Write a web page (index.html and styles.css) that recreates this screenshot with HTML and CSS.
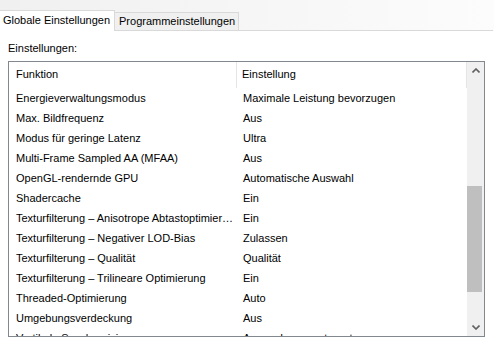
FILE: index.html
```html
<!DOCTYPE html>
<html lang="de">
<head>
    <meta charset="UTF-8">
    <title>Globale Einstellungen</title>
    <link rel="stylesheet" href="styles.css">
</head>
<body>
    <div class="tabs">
        <div class="tab active">Globale Einstellungen</div>
        <div class="tab">Programmeinstellungen</div>
        <div class="tab-rest"></div>
    </div>
    <div class="panel">
        <div class="label">Einstellungen:</div>
        <div class="listbox">
            <div class="list">
                <div class="row head">
                    <div class="col-a">Funktion</div>
                    <div class="col-b">Einstellung</div>
                </div>
                <div class="row"><div class="col-a">Energieverwaltungsmodus</div><div class="col-b">Maximale Leistung bevorzugen</div></div>
                <div class="row"><div class="col-a">Max. Bildfrequenz</div><div class="col-b">Aus</div></div>
                <div class="row"><div class="col-a">Modus für geringe Latenz</div><div class="col-b">Ultra</div></div>
                <div class="row"><div class="col-a">Multi-Frame Sampled AA (MFAA)</div><div class="col-b">Aus</div></div>
                <div class="row"><div class="col-a">OpenGL-rendernde GPU</div><div class="col-b">Automatische Auswahl</div></div>
                <div class="row"><div class="col-a">Shadercache</div><div class="col-b">Ein</div></div>
                <div class="row"><div class="col-a">Texturfilterung – Anisotrope Abtastoptimierung</div><div class="col-b">Ein</div></div>
                <div class="row"><div class="col-a">Texturfilterung – Negativer LOD-Bias</div><div class="col-b">Zulassen</div></div>
                <div class="row"><div class="col-a">Texturfilterung – Qualität</div><div class="col-b">Qualität</div></div>
                <div class="row"><div class="col-a">Texturfilterung – Trilineare Optimierung</div><div class="col-b">Ein</div></div>
                <div class="row"><div class="col-a">Threaded-Optimierung</div><div class="col-b">Auto</div></div>
                <div class="row"><div class="col-a">Umgebungsverdeckung</div><div class="col-b">Aus</div></div>
                <div class="row"><div class="col-a">Vertikale Synchronisierung</div><div class="col-b">Anwendungsgesteuert</div></div>
            </div>
            <div class="scrollbar">
                <div class="arrow">
                    <svg width="8" height="5" viewBox="0 0 8 5"><path d="M0.5 4.5 L4 1 L7.5 4.5" fill="none" stroke="#606060" stroke-width="1.6"/></svg>
                </div>
                <div class="track">
                    <div class="thumb"></div>
                </div>
                <div class="arrow">
                    <svg width="8" height="5" viewBox="0 0 8 5"><path d="M0.5 0.5 L4 4 L7.5 0.5" fill="none" stroke="#606060" stroke-width="1.6"/></svg>
                </div>
            </div>
        </div>
    </div>
</body>
</html>
```

FILE: styles.css
```css
body {
    margin: 0;
    padding: 0;
    width: 494px;
    height: 341px;
    overflow: hidden;
    background: #fff;
    color: #000;
    font-family: "Liberation Sans", Arial, sans-serif;
    font-size: 11px;
}
.tabs {
    display: flex;
    align-items: flex-end;
    height: 31px;
    background: linear-gradient(90deg, #f0f0f0, #fcfcfc);
}
.tab {
    box-sizing: border-box;
    height: 19px;
    padding: 0 3px 0 4px;
    line-height: 17px;
    border: 1px solid #d9d9d9;
    border-left: none;
    background: #f0f0f0;
    white-space: nowrap;
}
.tab.active {
    height: 21px;
    padding: 0 4px 0 3px;
    line-height: 19px;
    background: #fff;
    border: 1px solid #d9d9d9;
    border-left: none;
    border-bottom: none;
}
.tab-rest {
    flex: 1;
    border-bottom: 1px solid #d9d9d9;
    margin-right: 1px;
}
.panel {
    padding: 8px 0 0 8px;
}
.label {
    height: 22px;
    line-height: 18px;
}
.listbox {
    display: flex;
    box-sizing: border-box;
    width: 477px;
    height: 276px;
    border: 1px solid #828790;
    overflow: hidden;
}
.list {
    flex: 1;
    overflow: hidden;
}
.row {
    display: flex;
    height: 20px;
    line-height: 20px;
    white-space: nowrap;
}
.row.head {
    height: 26px;
    line-height: 25px;
}
.col-a {
    width: 221px;
    padding-left: 7px;
    overflow: hidden;
    text-overflow: ellipsis;
}
.col-b {
    flex: 1;
    padding-left: 6px;
    overflow: hidden;
}
.head .col-a {
    border-right: 1px solid #e5e5e5;
    width: 220px;
}
.head .col-b {
    border-right: 1px solid #e5e5e5;
    padding-left: 5px;
}
.scrollbar {
    display: flex;
    flex-direction: column;
    width: 17px;
    background: #f0f0f0;
}
.arrow {
    height: 17px;
    display: flex;
    align-items: center;
    justify-content: center;
}
.track {
    flex: 1;
    padding-top: 107px;
}
.thumb {
    width: 15px;
    height: 106px;
    background: #bfbfbf;
}
```
